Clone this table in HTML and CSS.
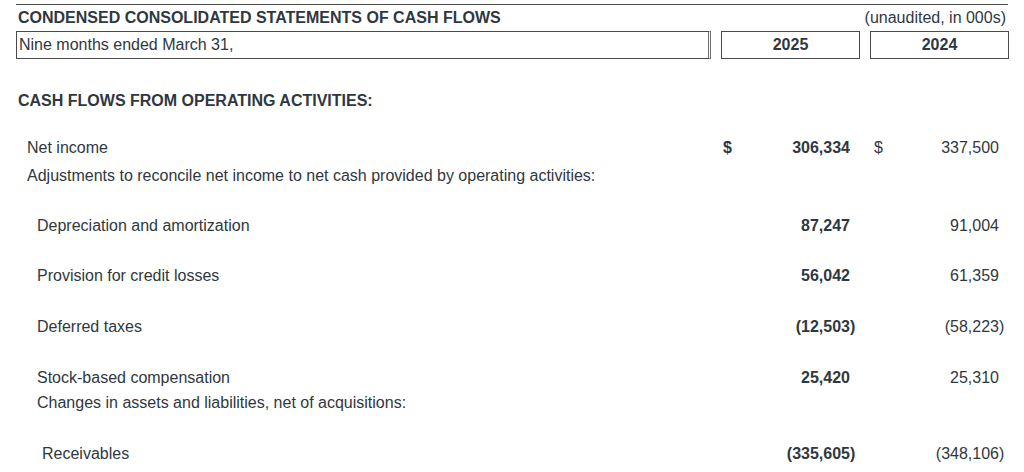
FILE: index.html
```html
<!DOCTYPE html>
<html>
<head>
<meta charset="utf-8">
<link rel="stylesheet" href="styles.css">
</head>
<body>
<div class="sheet">
  <div class="title-row">
    <div class="title">CONDENSED CONSOLIDATED STATEMENTS OF CASH FLOWS</div>
    <div class="note">(unaudited, in 000s)</div>
  </div>
  <div class="head-row">
    <div class="box box-label">Nine months ended March 31,</div>
    <div class="box box-year">2025</div>
    <div class="box box-year">2024</div>
  </div>

  <div class="section">CASH FLOWS FROM OPERATING ACTIVITIES:</div>

  <div class="row r-net">
    <div class="label l1">Net income</div>
    <div class="cell cur"><span class="dollar">$</span><span class="num">306,334</span><span class="paren"></span></div>
    <div class="cell prev"><span class="dollar">$</span><span class="num">337,500</span><span class="paren"></span></div>
  </div>
  <div class="row r-adj">
    <div class="label l1">Adjustments to reconcile net income to net cash provided by operating activities:</div>
    <div class="cell cur"></div>
    <div class="cell prev"></div>
  </div>
  <div class="row r-gap">
    <div class="label l2">Depreciation and amortization</div>
    <div class="cell cur"><span class="num">87,247</span><span class="paren"></span></div>
    <div class="cell prev"><span class="num">91,004</span><span class="paren"></span></div>
  </div>
  <div class="row r-gap">
    <div class="label l2">Provision for credit losses</div>
    <div class="cell cur"><span class="num">56,042</span><span class="paren"></span></div>
    <div class="cell prev"><span class="num">61,359</span><span class="paren"></span></div>
  </div>
  <div class="row r-gap-wide">
    <div class="label l2">Deferred taxes</div>
    <div class="cell cur"><span class="num">(12,503</span><span class="paren">)</span></div>
    <div class="cell prev"><span class="num">(58,223</span><span class="paren">)</span></div>
  </div>
  <div class="row r-gap-wide">
    <div class="label l2">Stock-based compensation</div>
    <div class="cell cur"><span class="num">25,420</span><span class="paren"></span></div>
    <div class="cell prev"><span class="num">25,310</span><span class="paren"></span></div>
  </div>
  <div class="row r-adj2">
    <div class="label l2">Changes in assets and liabilities, net of acquisitions:</div>
    <div class="cell cur"></div>
    <div class="cell prev"></div>
  </div>
  <div class="row r-gap-wide">
    <div class="label l3">Receivables</div>
    <div class="cell cur"><span class="num">(335,605</span><span class="paren">)</span></div>
    <div class="cell prev"><span class="num">(348,106</span><span class="paren">)</span></div>
  </div>
</div>
</body>
</html>
```

FILE: styles.css
```css
html, body {
  margin: 0;
  padding: 0;
  background: #ffffff;
}

body {
  font-family: "Liberation Sans", Arial, sans-serif;
  font-size: 16px;
  color: #2f3840;
}

.sheet {
  width: 992px;
  margin-left: 16px;
  padding-top: 4px;
}

.title-row {
  display: flex;
  justify-content: space-between;
  align-items: center;
  border-top: 1px solid #4a4a4a;
  height: 26px;
  padding: 0 2px;
}

.title {
  font-weight: bold;
}

.head-row {
  display: grid;
  grid-template-columns: 695px 139px 139px;
  column-gap: 10px;
  height: 28px;
}

.box {
  border: 1px solid #4a4a4a;
  display: flex;
  align-items: center;
  box-sizing: border-box;
}

.box-label {
  padding-left: 2px;
  border-right: 3px double #6a6a6a;
}

.box-year {
  justify-content: center;
  font-weight: bold;
}

.section {
  font-weight: bold;
  padding-left: 2px;
  margin-top: 32px;
  height: 20px;
  line-height: 20px;
}

.row {
  display: grid;
  grid-template-columns: 695px 139px 139px;
  column-gap: 10px;
  align-items: center;
  height: 20px;
}

.r-net { margin-top: 27px; }
.r-adj { margin-top: 8px; }
.r-gap { margin-top: 30px; }
.r-gap-wide { margin-top: 31px; }
.r-adj2 { margin-top: 5px; }

.label.l1 { padding-left: 11px; }
.label.l2 { padding-left: 21px; }
.label.l3 { padding-left: 26px; }

.cell {
  display: flex;
  justify-content: flex-end;
  align-items: center;
  padding-right: 4px;
  white-space: nowrap;
}

.cell.cur {
  font-weight: bold;
}

.dollar {
  margin-right: auto;
  padding-left: 2px;
}

.cell.prev .dollar {
  padding-left: 4px;
}

.paren {
  display: inline-block;
  width: 6px;
  text-align: left;
}
```
